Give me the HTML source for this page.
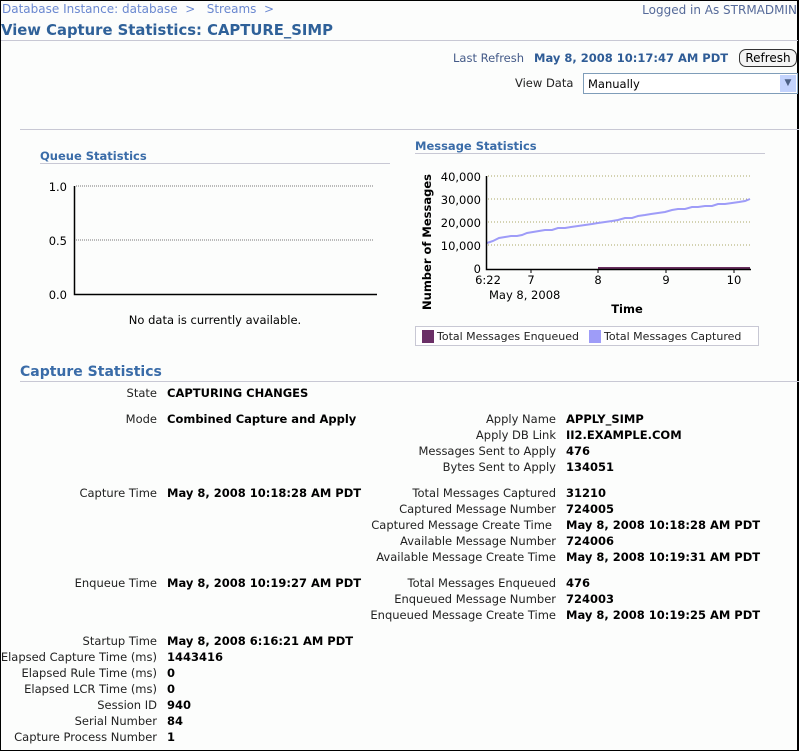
<!DOCTYPE html>
<html><head><meta charset="utf-8"><style>
*{margin:0;padding:0;box-sizing:border-box}
body{width:799px;height:751px;position:relative;overflow:hidden;background:#fcfdfc;font-family:"DejaVu Sans","Liberation Sans",sans-serif;font-size:11.5px;color:#000}
.a{position:absolute;white-space:nowrap;line-height:16px}
.l{position:absolute;white-space:nowrap;line-height:16px;text-align:right;color:#222}
.v{position:absolute;white-space:nowrap;line-height:16px;font-weight:bold;color:#000}
.h{position:absolute;height:1px;background:#c8c8d4}
.sec{position:absolute;color:#3a6ca8;font-weight:bold}
</style></head><body>
<div style="position:absolute;left:0;top:0;width:799px;height:751px;border-top:1px solid #000;border-left:1px solid #000;border-right:2px solid #000;border-bottom:1px solid #000"></div>
<div class="a" style="left:2px;top:1px;color:#6a88d0;font-size:12px">Database Instance: database &nbsp;&gt; &nbsp;&nbsp;Streams &nbsp;&gt;</div>
<div class="a" style="right:2px;top:2px;color:#556a99;font-size:12px">Logged in As STRMADMIN</div>
<div class="a" style="left:1px;top:21px;color:#2f6199;font-size:14.8px;font-weight:bold;line-height:20px">View Capture Statistics: CAPTURE_SIMP</div>
<div class="h" style="left:1px;top:40px;width:797px"></div>
<div class="a" style="left:453px;top:50px;color:#445a88">Last Refresh</div>
<div class="a" style="left:534px;top:50px;color:#2f5c96;font-weight:bold">May 8, 2008 10:17:47 AM PDT</div>
<div style="position:absolute;left:739px;top:49px;width:58px;height:18px;border:1px solid #333;border-radius:7px;background:#f4f4f4;font-size:12px;line-height:16px;text-align:center">Refresh</div>
<div class="a" style="left:515px;top:75px;color:#222">View Data</div>
<div style="position:absolute;left:583px;top:73px;width:215px;height:21px;border:1px solid #7f9db9;background:#fff"><span style="position:absolute;left:4px;top:2px;line-height:16px">Manually</span><span style="position:absolute;right:1px;top:1px;width:16px;height:17px;background:#c3d3fd;color:#4d6185;font-size:9px;text-align:center;line-height:17px">&#9660;</span></div>
<div class="h" style="left:20px;top:129px;width:779px"></div>

<div class="sec" style="left:40px;top:149px;font-size:11.5px">Queue Statistics</div>
<div class="h" style="left:40px;top:163px;width:350px"></div>
<svg style="position:absolute;left:0;top:170px" width="400" height="170">
<g font-family="DejaVu Sans,sans-serif" font-size="11.5">
<line x1="76" y1="16" x2="374" y2="16" stroke="#777" stroke-dasharray="1,1"/>
<line x1="76" y1="70" x2="374" y2="70" stroke="#777" stroke-dasharray="1,1"/>
<polyline points="74.5,16 74.5,124.5 377,124.5" fill="none" stroke="#000" stroke-width="1.5"/>
<text x="67" y="21" text-anchor="end">1.0</text>
<text x="67" y="75" text-anchor="end">0.5</text>
<text x="67" y="129" text-anchor="end">0.0</text>
<text x="215" y="154" text-anchor="middle">No data is currently available.</text>
</g></svg>

<div class="sec" style="left:415px;top:139px;font-size:11.5px">Message Statistics</div>
<div class="h" style="left:415px;top:153px;width:350px"></div>
<svg style="position:absolute;left:400px;top:160px" width="399" height="190">
<g font-family="DejaVu Sans,sans-serif" font-size="11.5">
<g stroke="#aaa866" stroke-dasharray="1,2"><line x1="88" y1="16" x2="350" y2="16"/><line x1="88" y1="39" x2="350" y2="39"/><line x1="88" y1="62" x2="350" y2="62"/><line x1="88" y1="85" x2="350" y2="85"/></g>
<text x="81" y="21" text-anchor="end">40,000</text>
<text x="81" y="44" text-anchor="end">30,000</text>
<text x="81" y="67" text-anchor="end">20,000</text>
<text x="81" y="90" text-anchor="end">10,000</text>
<text x="81" y="113" text-anchor="end">0</text>
<polyline points="87,83 93,81 99,78 105,77 111,76 117,76 122,75 127,73 133,72 139,71 145,70 152,70 158,68 165,68 171,67 178,66 185,65 192,64 198,63 205,62 212,61 218,60 225,58 232,58 238,56 245,55 251,54 258,53 265,52 272,50 278,49 285,49 292,47 298,47 305,46 312,46 318,44 325,44 332,43 339,42 345,41 350,39" fill="none" stroke="#9e9cf8" stroke-width="2"/>
<line x1="198" y1="108" x2="350" y2="108" stroke="#6a3060" stroke-width="2"/>
<polyline points="86.5,16 86.5,109.5 351,109.5" fill="none" stroke="#000" stroke-width="1.5"/>
<g stroke="#000"><line x1="131" y1="109" x2="131" y2="113"/><line x1="198" y1="109" x2="198" y2="113"/><line x1="266" y1="109" x2="266" y2="113"/><line x1="334" y1="109" x2="334" y2="113"/></g>
<text x="88" y="124" text-anchor="middle">6:22</text>
<text x="131" y="124" text-anchor="middle">7</text>
<text x="198" y="124" text-anchor="middle">8</text>
<text x="266" y="124" text-anchor="middle">9</text>
<text x="334" y="124" text-anchor="middle">10</text>
<text x="89" y="139">May 8, 2008</text>
<text x="227" y="153" text-anchor="middle" font-weight="bold">Time</text>
<text transform="translate(31,82) rotate(-90)" text-anchor="middle" font-weight="bold">Number of Messages</text>
</g></svg>
<div style="position:absolute;left:415px;top:326px;width:344px;height:20px;border:1px solid #c8c8d4;background:#fff"></div>
<div style="position:absolute;left:422px;top:330px;width:12px;height:13px;background:#6a2f66"></div>
<div class="a" style="left:437px;top:329px;color:#222;font-size:11px">Total Messages Enqueued</div>
<div style="position:absolute;left:589px;top:330px;width:12px;height:13px;background:#9e9cf8"></div>
<div class="a" style="left:604px;top:329px;color:#222;font-size:11px">Total Messages Captured</div>

<div class="sec" style="left:20px;top:364px;font-size:14px">Capture Statistics</div>
<div class="h" style="left:20px;top:381px;width:779px"></div>

<div class="l" style="right:642px;top:385px">State</div><div class="v" style="left:167px;top:385px">CAPTURING CHANGES</div>
<div class="l" style="right:642px;top:411px">Mode</div><div class="v" style="left:167px;top:411px">Combined Capture and Apply</div>
<div class="l" style="right:642px;top:485px">Capture Time</div><div class="v" style="left:167px;top:485px">May 8, 2008 10:18:28 AM PDT</div>
<div class="l" style="right:642px;top:575px">Enqueue Time</div><div class="v" style="left:167px;top:575px">May 8, 2008 10:19:27 AM PDT</div>
<div class="l" style="right:642px;top:633px">Startup Time</div><div class="v" style="left:167px;top:633px">May 8, 2008 6:16:21 AM PDT</div>
<div class="l" style="right:642px;top:649px">Elapsed Capture Time (ms)</div><div class="v" style="left:167px;top:649px">1443416</div>
<div class="l" style="right:642px;top:665px">Elapsed Rule Time (ms)</div><div class="v" style="left:167px;top:665px">0</div>
<div class="l" style="right:642px;top:681px">Elapsed LCR Time (ms)</div><div class="v" style="left:167px;top:681px">0</div>
<div class="l" style="right:642px;top:697px">Session ID</div><div class="v" style="left:167px;top:697px">940</div>
<div class="l" style="right:642px;top:713px">Serial Number</div><div class="v" style="left:167px;top:713px">84</div>
<div class="l" style="right:642px;top:729px">Capture Process Number</div><div class="v" style="left:167px;top:729px">1</div>

<div class="l" style="right:243px;top:411px">Apply Name</div><div class="v" style="left:566px;top:411px">APPLY_SIMP</div>
<div class="l" style="right:243px;top:427px">Apply DB Link</div><div class="v" style="left:566px;top:427px">II2.EXAMPLE.COM</div>
<div class="l" style="right:243px;top:443px">Messages Sent to Apply</div><div class="v" style="left:566px;top:443px">476</div>
<div class="l" style="right:243px;top:459px">Bytes Sent to Apply</div><div class="v" style="left:566px;top:459px">134051</div>
<div class="l" style="right:243px;top:485px">Total Messages Captured</div><div class="v" style="left:566px;top:485px">31210</div>
<div class="l" style="right:243px;top:501px">Captured Message Number</div><div class="v" style="left:566px;top:501px">724005</div>
<div class="l" style="right:247px;top:517px">Captured Message Create Time</div><div class="v" style="left:566px;top:517px">May 8, 2008 10:18:28 AM PDT</div>
<div class="l" style="right:243px;top:533px">Available Message Number</div><div class="v" style="left:566px;top:533px">724006</div>
<div class="l" style="right:243px;top:549px">Available Message Create Time</div><div class="v" style="left:566px;top:549px">May 8, 2008 10:19:31 AM PDT</div>
<div class="l" style="right:243px;top:575px">Total Messages Enqueued</div><div class="v" style="left:566px;top:575px">476</div>
<div class="l" style="right:243px;top:591px">Enqueued Message Number</div><div class="v" style="left:566px;top:591px">724003</div>
<div class="l" style="right:243px;top:607px">Enqueued Message Create Time</div><div class="v" style="left:566px;top:607px">May 8, 2008 10:19:25 AM PDT</div>
</body></html>
